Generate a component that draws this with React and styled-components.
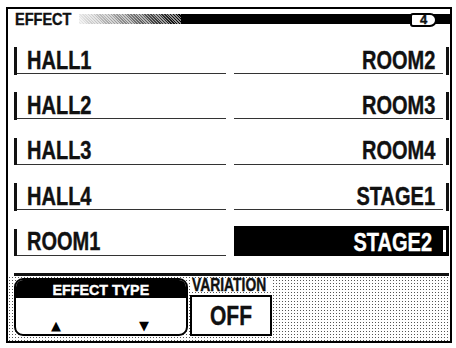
import React from "react";
import styled, { createGlobalStyle } from "styled-components";

const GlobalStyle = createGlobalStyle`
  html, body { margin: 0; padding: 0; background: #fff; }
  body { width: 456px; height: 348px; overflow: hidden; }
`;

const FONT = `"Liberation Sans", Arial, sans-serif`;

const Screen = styled.div`
  box-sizing: border-box;
  width: 446px;
  height: 336px;
  margin: 7px 0 0 6px;
  border: 2px solid #000;
  display: flex;
  flex-direction: column;
  font-family: ${FONT};
  font-weight: 700;
  color: #111;
  -webkit-text-stroke: 0.4px currentColor;
`;

const Narrow = styled.span`
  display: inline-block;
  white-space: nowrap;
  transform: scaleX(${(p) => p.$sx || 0.78});
  transform-origin: ${(p) => p.$origin || "left"} center;
`;

const Header = styled.div`
  display: flex;
  align-items: center;
  height: 14px;
  margin-top: 3px;
  padding-left: 7px;
`;

const Title = styled.div`
  width: 64px;
  font-size: 16.5px;
  line-height: 14px;
`;

const Dither = styled.div`
  width: 102px;
  height: 10px;
  background:
    repeating-linear-gradient(45deg, rgba(255,255,255,0.55) 0 1px, transparent 1px 2px),
    linear-gradient(to right, #e8e8e8 0%, #888 45%, #000 100%);
`;

const Bar = styled.div`
  flex: 1;
  height: 10px;
  background: #000;
  display: flex;
  align-items: center;
  justify-content: flex-end;
  padding-right: 13px;
`;

const Badge = styled.div`
  box-sizing: border-box;
  width: 27px;
  height: 14px;
  margin-top: 2px;
  background: #fff;
  border: 2px solid #000;
  border-radius: 3px 7px 7px 3px;
  display: flex;
  align-items: center;
  justify-content: center;
  font-size: 13px;
  line-height: 10px;
`;

const Grid = styled.div`
  display: grid;
  grid-template-columns: 212px 215px;
  column-gap: 8px;
  grid-auto-rows: 30px;
  row-gap: 15.4px;
  padding: 0 0 0 6px;
  margin-top: 18px;
`;

const Cell = styled.div`
  display: flex;
  align-items: center;
  justify-content: ${(p) => (p.$right ? "flex-end" : "flex-start")};
  background: ${(p) => (p.$selected ? "#000" : "transparent")};
  color: ${(p) => (p.$selected ? "#fff" : "#111")};
  border-bottom: ${(p) => (p.$selected ? "none" : "1.5px solid #333")};
  margin-right: ${(p) => (p.$right && !p.$selected ? "6px" : "0")};
  box-sizing: border-box;
`;

const Tick = styled.span`
  align-self: stretch;
  width: 3px;
  margin-top: 3px;
  margin-bottom: -1.5px;
  background: ${(p) => (p.$selected ? "#fff" : "#111")};
  ${(p) =>
    p.$right
      ? `margin-right: ${p.$selected ? "3px" : "-6px"}; margin-left: 11px;`
      : "margin-right: 10px;"}
  ${(p) => (p.$selected ? "margin-top: 4px; margin-bottom: 4px;" : "")}
`;

const Label = styled.span`
  font-size: 26px;
  line-height: 26px;
  padding-top: 2px;
`;

const Rule = styled.div`
  height: 3px;
  background: #111;
  margin: 17px 1px 0 6px;
`;

const Bottom = styled.div`
  flex: 1;
  display: flex;
  align-items: flex-start;
  padding: 2px 0 0 6px;
  background:
    radial-gradient(circle, #555 0.55px, transparent 0.75px) 0 0 / 3px 3px,
    #fff;
`;

const TypeBox = styled.div`
  box-sizing: border-box;
  width: 174px;
  height: 58px;
  border: 2px solid #000;
  border-radius: 9px;
  overflow: hidden;
  background: #fff;
  display: flex;
  flex-direction: column;
`;

const TypeHead = styled.div`
  height: 18px;
  background: #000;
  color: #fff;
  font-size: 15px;
  line-height: 19px;
  text-align: center;
`;

const Arrows = styled.div`
  flex: 1;
  display: flex;
  align-items: flex-end;
  justify-content: space-between;
  padding: 0 37px 2px 35px;
  font-family: "DejaVu Sans", sans-serif;
  font-size: 13px;
  line-height: 13px;
  color: #000;
  -webkit-text-stroke: 0;
`;

const VarGroup = styled.div`
  display: flex;
  flex-direction: column;
  margin-left: 2px;
  width: 82px;
`;

const VarLabel = styled.div`
  height: 14px;
  background: #fff;
  font-size: 18px;
  line-height: 15px;
  padding-left: 2px;
`;

const VarBox = styled.div`
  box-sizing: border-box;
  height: 41px;
  margin-top: 3px;
  border: 2px solid #000;
  background: #fff;
  display: flex;
  align-items: center;
  justify-content: center;
  font-size: 28px;
  padding-top: 2px;
`;

const rows = [
  ["HALL1", "ROOM2"],
  ["HALL2", "ROOM3"],
  ["HALL3", "ROOM4"],
  ["HALL4", "STAGE1"],
  ["ROOM1", "STAGE2"],
];
const selected = "STAGE2";

export default function App() {
  return (
    <>
      <GlobalStyle />
      <Screen>
        <Header>
          <Title>
            <Narrow $sx={0.88}>EFFECT</Narrow>
          </Title>
          <Dither />
          <Bar>
            <Badge>4</Badge>
          </Bar>
        </Header>
        <Grid>
          {rows.map(([l, r]) => (
            <React.Fragment key={l}>
              <Cell>
                <Tick />
                <Label>
                  <Narrow $sx={0.77}>{l}</Narrow>
                </Label>
              </Cell>
              <Cell $right $selected={r === selected}>
                <Label>
                  <Narrow $sx={0.77} $origin="right">{r}</Narrow>
                </Label>
                <Tick $right $selected={r === selected} />
              </Cell>
            </React.Fragment>
          ))}
        </Grid>
        <Rule />
        <Bottom>
          <TypeBox>
            <TypeHead>
              <Narrow $sx={0.95} $origin="center">EFFECT TYPE</Narrow>
            </TypeHead>
            <Arrows>
              <span>▲</span>
              <span>▼</span>
            </Arrows>
          </TypeBox>
          <VarGroup>
            <VarLabel>
              <Narrow $sx={0.77}>VARIATION</Narrow>
            </VarLabel>
            <VarBox>
              <Narrow $sx={0.75} $origin="center">OFF</Narrow>
            </VarBox>
          </VarGroup>
        </Bottom>
      </Screen>
    </>
  );
}
